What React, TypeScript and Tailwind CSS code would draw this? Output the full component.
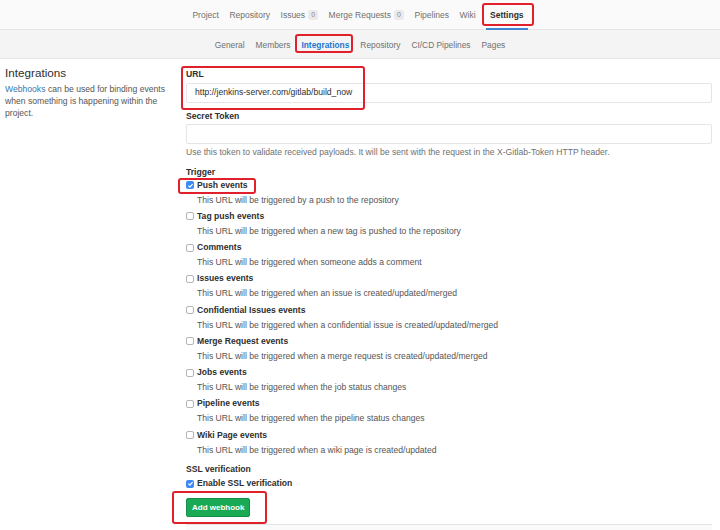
import React from "react";

const font = { fontFamily: '"Liberation Sans", Arial, sans-serif' };

const triggers = [
  { name: "Push events", desc: "This URL will be triggered by a push to the repository", checked: true },
  { name: "Tag push events", desc: "This URL will be triggered when a new tag is pushed to the repository" },
  { name: "Comments", desc: "This URL will be triggered when someone adds a comment" },
  { name: "Issues events", desc: "This URL will be triggered when an issue is created/updated/merged" },
  { name: "Confidential Issues events", desc: "This URL will be triggered when a confidential issue is created/updated/merged" },
  { name: "Merge Request events", desc: "This URL will be triggered when a merge request is created/updated/merged" },
  { name: "Jobs events", desc: "This URL will be triggered when the job status changes" },
  { name: "Pipeline events", desc: "This URL will be triggered when the pipeline status changes" },
  { name: "Wiki Page events", desc: "This URL will be triggered when a wiki page is created/updated" },
];

function Checkbox({ checked }: { checked?: boolean }) {
  if (checked) {
    return (
      <span className="w-[8px] h-[8px] rounded-[2px] bg-[#3d8af7] flex items-center justify-center shrink-0">
        <svg viewBox="0 0 8 8" className="w-[7px] h-[7px]">
          <path d="M1.6 4.2 L3.3 5.8 L6.4 2.3" fill="none" stroke="white" strokeWidth="1.3" />
        </svg>
      </span>
    );
  }
  return <span className="w-[8px] h-[8px] rounded-[2px] border border-[#b5b5b5] bg-white shrink-0" />;
}

function Badge() {
  return (
    <span className="ml-[3px] inline-flex items-center justify-center w-[10px] h-[10px] rounded-[3px] bg-[#eaeaea] text-[7px] text-[#888]">
      0
    </span>
  );
}

function RedBox({ className }: { className: string }) {
  return <div className={"absolute border-[2.5px] border-[#e2202c] rounded-[3px] pointer-events-none " + className} />;
}

export default function App() {
  return (
    <div className="relative w-[720px] h-[530px] overflow-hidden bg-white text-[#2e2e2e]" style={font}>
      {/* top nav */}
      <div className="h-[30px] bg-[#fafafa] border-b border-[#e5e5e5] flex justify-center items-stretch gap-[10.5px] text-[8.5px] text-[#707070]">
        <div className="flex items-center pt-[1px]">Project</div>
        <div className="flex items-center pt-[1px]">Repository</div>
        <div className="flex items-center pt-[1px]">Issues<Badge /></div>
        <div className="flex items-center pt-[1px]">Merge Requests<Badge /></div>
        <div className="flex items-center pt-[1px]">Pipelines</div>
        <div className="flex items-center pt-[1px]">Wiki</div>
        <div className="flex items-center px-[4px] border-b-2 border-[#3e86d0] font-bold text-[#2e2e2e] -mb-px pt-[2px]">Settings</div>
      </div>
      {/* sub nav */}
      <div className="h-[29px] bg-[#f4f4f4] border-b border-[#e5e5e5] flex justify-center items-center gap-[11px] text-[8.4px] text-[#707070] pt-[2px]">
        <span>General</span>
        <span>Members</span>
        <span className="font-bold text-[#1f78d1]">Integrations</span>
        <span>Repository</span>
        <span>CI/CD Pipelines</span>
        <span>Pages</span>
      </div>
      {/* content */}
      <div className="flex">
        <div className="w-[186px] shrink-0 pl-[5px] pt-[7px]">
          <h2 className="text-[11.7px] leading-[14px] text-[#2e2e2e]">Integrations</h2>
          <div className="mt-[2.5px] text-[8.6px] leading-[12px] text-[#555]">
            <div className="flex gap-[2.5px]">
              <a className="text-[#3777b0]">Webhooks</a>
              <span>can be used for binding events</span>
            </div>
            <div>when something is happening within the</div>
            <div>project.</div>
          </div>
        </div>
        <div className="flex-1 pr-[8px] pt-[9px] text-[8.6px]">
          <div className="font-bold leading-[12px]">URL</div>
          <div className="mt-[2.5px] h-[20px] border border-[#e5e5e5] rounded-[2px] flex items-center pl-[8px] text-[#2e2e2e]">
            http://jenkins-server.com/gitlab/build_now
          </div>
          <div className="mt-[7px] font-bold leading-[12px]">Secret Token</div>
          <div className="mt-[2px] h-[20px] border border-[#e5e5e5] rounded-[2px]" />
          <div className="mt-[2px] leading-[12px] text-[#707070]">
            Use this token to validate received payloads. It will be sent with the request in the X-Gitlab-Token HTTP header.
          </div>
          <div className="mt-[8px] font-bold leading-[12px]">Trigger</div>
          <div className="flex flex-col">
            {triggers.map((t) => (
              <div key={t.name} className="h-[31.25px]">
                <div className="h-[15px] flex items-center gap-[3px]">
                  <Checkbox checked={t.checked} />
                  <span className="font-bold">{t.name}</span>
                </div>
                <div className="h-[15px] leading-[15px] pl-[11px] text-[#555]">{t.desc}</div>
              </div>
            ))}
          </div>
          <div className="mt-[4px] font-bold leading-[12px]">SSL verification</div>
          <div className="mt-[1.5px] h-[15px] flex items-center gap-[3px]">
            <Checkbox checked />
            <span className="font-bold">Enable SSL verification</span>
          </div>
          <button className="mt-[7px] h-[19px] px-[5px] rounded-[2px] bg-[#1aaa55] border border-[#168f48] text-white font-bold text-[8px]">
            Add webhook
          </button>
          <div className="mt-[7px] border-t border-[#e5e5e5] bg-[#fafafa] h-[10px]" />
        </div>
      </div>

      {/* annotation boxes */}
      <RedBox className="left-[482px] top-[3px] w-[52px] h-[23px]" />
      <RedBox className="left-[295px] top-[34px] w-[58px] h-[19px]" />
      <RedBox className="left-[181px] top-[66px] w-[184px] h-[44px]" />
      <RedBox className="left-[178px] top-[178px] w-[78px] h-[16px]" />
      <RedBox className="left-[172px] top-[491px] w-[95px] h-[33px]" />
    </div>
  );
}
